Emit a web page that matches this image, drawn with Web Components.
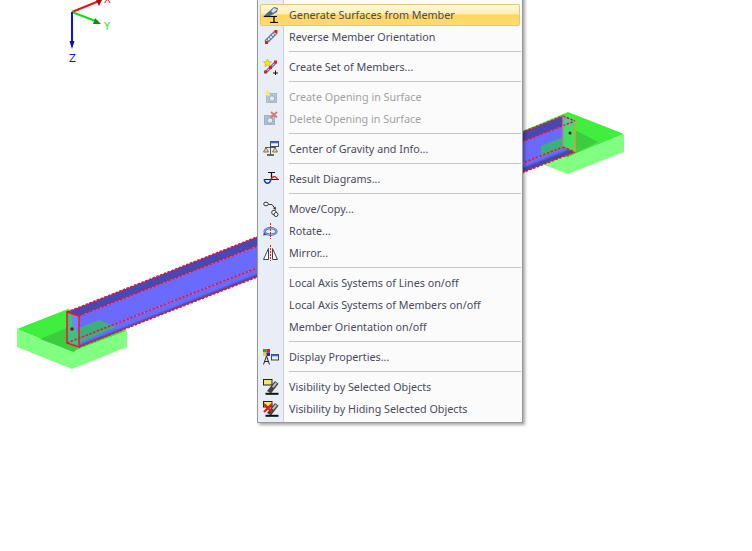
<!DOCTYPE html>
<html>
<head>
<meta charset="utf-8">
<title>Member context menu</title>
<style>
  html, body { margin: 0; padding: 0; background: #fff; overflow: hidden; }
  body { width: 752px; height: 551px; position: relative; font-family: "Noto Sans", "Liberation Sans", sans-serif; }
</style>
</head>
<body>
<model-view>
  <context-menu>
    <menu-item icon="surface" active>Generate Surfaces from Member</menu-item>
    <menu-item icon="reverse">Reverse Member Orientation</menu-item>
    <menu-sep></menu-sep>
    <menu-item icon="set">Create Set of Members...</menu-item>
    <menu-sep></menu-sep>
    <menu-item icon="opening" disabled>Create Opening in Surface</menu-item>
    <menu-item icon="delopening" disabled>Delete Opening in Surface</menu-item>
    <menu-sep></menu-sep>
    <menu-item icon="gravity">Center of Gravity and Info...</menu-item>
    <menu-sep></menu-sep>
    <menu-item icon="diagram">Result Diagrams...</menu-item>
    <menu-sep></menu-sep>
    <menu-item icon="move">Move/Copy...</menu-item>
    <menu-item icon="rotate">Rotate...</menu-item>
    <menu-item icon="mirror">Mirror...</menu-item>
    <menu-sep></menu-sep>
    <menu-item>Local Axis Systems of Lines on/off</menu-item>
    <menu-item>Local Axis Systems of Members on/off</menu-item>
    <menu-item>Member Orientation on/off</menu-item>
    <menu-sep></menu-sep>
    <menu-item icon="display">Display Properties...</menu-item>
    <menu-sep></menu-sep>
    <menu-item icon="visible">Visibility by Selected Objects</menu-item>
    <menu-item icon="hide">Visibility by Hiding Selected Objects</menu-item>
  </context-menu>
</model-view>

<script>
// small icons for the menu, all in a 16x16 box
const star = '<path d="M4.500 0l1.200 2.600 2.800.3-2.100 1.900.6 2.800-2.500-1.400-2.500 1.400.6-2.800L.5 2.900l2.800-.3z"';
const scope = '<path d="M4 12 12 2l3.500 2.800-7.500 9.700z" fill="#444"/><path d="M9 7.500l3.500-4.300 1.500 1.300-3.500 4.300z" fill="#c4c4c4"/><path d="M2.500 14.800h13" stroke="#111" stroke-width="2"/>';
const ICONS = {
  surface: `<path d="M0 10 3 7 11 0l4 1-1 4-7 4z" fill="#4f6890"/><path d="M8 4l3-3 3 1-1 2-3 2z" fill="#d5e0ee"/><path d="M1 9.500h13" stroke="#111" stroke-width="1.100"/><path d="M11 9.500v6" stroke="#111" stroke-width="1.400"/><path d="M7 15.500h8" stroke="#111" stroke-width="1.200"/>`,
  reverse: `<path d="M3 13 13 3" stroke="#68788f" stroke-width="4.500"/><path d="M3 13 13 3" stroke="#eef1f6" stroke-width="1.800" stroke-dasharray="2 1"/><rect x="11.500" y="1" width="3" height="3" fill="#d22"/><rect x="2" y="12" width="3" height="3" fill="#d22"/>`,
  set: `<path d="M3 13 13 3" stroke="#68788f" stroke-width="3"/><path d="M3 13 13 3" stroke="#eef1f6" stroke-width="1" stroke-dasharray="2 1"/>${star} fill="#f6e520" stroke="#a89a20" stroke-width=".5"/><rect x="11" y="1.500" width="3" height="3" fill="#d22"/><rect x="6" y="7" width="3" height="3" fill="#d22"/><rect x="1" y="11.500" width="3" height="3" fill="#d22"/><path d="M10 14h5M12.500 11.500v5" stroke="#111"/>`,
  opening: `<g opacity=".6"><rect x="3.500" y="4.500" width="10" height="9" fill="#8fb0c8" stroke="#7a98ac"/><circle cx="9" cy="9.500" r="2.800" fill="#dde6ee" stroke="#5f7f96"/>${star} fill="#f2e65a"/></g>`,
  delopening: `<g opacity=".65"><rect x="1.500" y="4.500" width="10" height="9" fill="#8fa8c8" stroke="#7a90ac"/><circle cx="7" cy="9.500" r="2.800" fill="#dde6ee" stroke="#5f7f96"/><path d="M8 1l6 5.500M14 1 8 6.500" stroke="#d83030" stroke-width="1.800"/></g>`,
  gravity: `<rect x="7.500" y="0.500" width="8" height="5" fill="#eef2f8" stroke="#3a4a60"/><rect x="7.500" y="0.500" width="8" height="1.800" fill="#3a6bc0"/><path d="M7.500 5.500v8M2 6.500h11" stroke="#555" stroke-width="1"/><path d="M3 6.500.5 11h5zM12 6.500 9.500 11h5z" fill="#e8d8a8" stroke="#6a5c2a" stroke-width=".8"/><path d="M4 14h7" stroke="#4a4a30" stroke-width="1.600"/>`,
  diagram: `<path d="M5 1.500h7M8.500 1.500v7" stroke="#111" stroke-width="1.200"/><path d="M1 8.500h15" stroke="#222" stroke-width="1"/><path d="M8 8.500c1.500-4 5-4 7 .5" fill="none" stroke="#d81818" stroke-width="1.200"/><path d="M1 8.500c1.500 5 5.500 5 7 0" fill="none" stroke="#2030d0" stroke-width="1.400"/>`,
  move: `<ellipse cx="3" cy="3" rx="2.300" ry="1.800" fill="#fff" stroke="#333"/><path d="M5.500 3.500h3.500l3 4" fill="none" stroke="#333"/><path d="M13 9l-3-1.800 2.500-1.600z" fill="#333"/><circle cx="11" cy="11.500" r="2.300" fill="#fff" stroke="#333"/><circle cx="13" cy="13.500" r="2" fill="#fff" stroke="#333"/>`,
  rotate: `<ellipse cx="7.500" cy="8.500" rx="6" ry="3.300" fill="none" stroke="#3f6fae" stroke-width="2.200"/><ellipse cx="7.500" cy="8.500" rx="6" ry="3.300" fill="none" stroke="#a8c8ea" stroke-width=".8"/><path d="M1 9.500l-1 3 4-.5z" fill="#2a5a9a"/><path d="M7.500 0v16" stroke="#e02020" stroke-dasharray="2 1"/>`,
  mirror: `<path d="M5.500 3.500 .5 14.500h5zM9.500 3.500l5 11h-5z" fill="#fff" stroke="#444" stroke-width="1"/><path d="M7.500 0v16" stroke="#e02020" stroke-dasharray="2 1"/>`,
  display: `<rect x="0" y="0" width="3.500" height="3.500" fill="#2a2"/><rect x="3.500" y="0" width="3.500" height="3.500" fill="#d22"/><rect x="0" y="3.500" width="3.500" height="3.500" fill="#ec2"/><rect x="3.500" y="3.500" width="3.500" height="3.500" fill="#22c"/><path d="M3.500 7 .5 15.500M3.500 7l3 8.500M1.500 12.500h4" stroke="#222" fill="none"/><rect x="8.500" y="5.500" width="7" height="5.500" fill="#eef2f8" stroke="#345"/><rect x="8.500" y="5.500" width="7" height="1.800" fill="#3a6bc0"/>`,
  visible: `${scope}<rect x=".5" y=".5" width="8.500" height="5.500" fill="#f5e85a" stroke="#222"/>`,
  hide: `${scope}<rect x=".5" y=".5" width="8.500" height="5.500" fill="#f5e85a" stroke="#222"/><path d="M1 3l8 8M9 3l-8 8" stroke="#e01818" stroke-width="2.200"/>`
};

class MenuItem extends HTMLElement {
  constructor() {
    super();
    this.attachShadow({ mode: 'open' });
    const name = this.getAttribute('icon');
    const art = name ? `<svg width="16" height="16" viewBox="0 0 16 16">${ICONS[name]}</svg>` : '';
    this.shadowRoot.innerHTML = `
      <style>
        :host { display: flex; align-items: center; height: 22px; margin-left: 1px; color: #4a4a5a; }
        :host([disabled]) { color: #a2a2a2; }
        :host([active]) { margin-left: 2px; width: 260px; box-sizing: border-box;
          border: 1px solid #e3c878; border-radius: 2px;
          background: linear-gradient(#fff8dc 0%, #ffedb0 45%, #ffd658 50%, #ffdc74 100%); }
        .icon { width: 24px; flex: none; display: flex; justify-content: center; align-items: center; }
        svg { display: block; }
        .text { padding-left: 6px; white-space: nowrap; }
        :host([active]) .icon { width: 20px; padding-right: 2px; }
      </style>
      <span class="icon">${art}</span><span class="text"><slot></slot></span>`;
  }
}

class MenuSep extends HTMLElement {
  constructor() {
    super();
    this.attachShadow({ mode: 'open' });
    this.shadowRoot.innerHTML = `
      <style>
        :host { display: block; height: 8px; box-sizing: border-box; padding: 3px 1px 0 31px; }
        div { height: 1px; background: #c6c6c6; }
      </style><div></div>`;
  }
}

class ContextMenu extends HTMLElement {
  constructor() {
    super();
    this.attachShadow({ mode: 'open' });
    this.shadowRoot.innerHTML = `
      <style>
        :host { display: block; position: absolute; left: 257px; top: -5px; width: 266px; box-sizing: border-box;
          padding: 8px 0 2px; border: 1px solid #979797; font-size: 10.75px; line-height: 22px;
          background: linear-gradient(90deg, #e9eef6 0, #e9eef6 25px, #c9ced6 25px, #c9ced6 26px, #fbfbfb 26px);
          box-shadow: 2px 2px 3px rgba(0,0,0,.35); }
      </style><slot></slot>`;
  }
}

class ModelView extends HTMLElement {
  constructor() {
    super();
    this.attachShadow({ mode: 'open' });
    const dash = 'stroke="#f41030" stroke-width="1.500" stroke-dasharray="2.500 1.500" fill="none"';
    this.shadowRoot.innerHTML = `
      <style>
        :host { display: block; width: 752px; height: 551px; position: relative; overflow: hidden; }
        svg { display: block; }
        text { font-family: "DejaVu Sans", sans-serif; font-size: 10px; }
      </style>
      <svg width="752" height="551" viewBox="0 0 752 551">
        <defs>
          <linearGradient id="under" gradientUnits="userSpaceOnUse" x1="67" y1="343" x2="70" y2="350.500">
            <stop offset="0" stop-color="#6a6aff"/><stop offset=".65" stop-color="#6a6aff"/><stop offset="1" stop-color="#4848a8"/>
          </linearGradient>
        </defs>

        <!-- axis cross -->
        <path d="M72 12 99 1" stroke="#f01010" stroke-width="2"/>
        <path d="M95 -2l8 0-4 8z" fill="#a01010"/>
        <path d="M72 12 98 22" stroke="#10e010" stroke-width="2"/>
        <path d="M95 18l6 6-8 0z" fill="#109010"/>
        <path d="M72 12V42" stroke="#1010e0" stroke-width="2"/>
        <path d="M69.500 41h5l-2.500 8z" fill="#101090"/>
        <text x="104" y="3" fill="#e01010">X</text>
        <text x="104" y="30" fill="#30e030">Y</text>
        <text x="69" y="62" fill="#1010e0">Z</text>

        <!-- left support -->
        <path d="M17 329 68 309 127 331 72 352z" fill="#40ee40"/>
        <path d="M17 329 72 352 72 369 17 347z" fill="#80ff80"/>
        <path d="M127 331 72 352 72 369 127 347z" fill="#80ff80"/>
        <path d="M40 339 67 328 79 347 74 352z" fill="#3ccc40"/>
        <path d="M79 347 99 320 122 331 79 348z" fill="#22c040"/>

        <!-- right support -->
        <path d="M513 135 568 112 624 134 568 157z" fill="#40ee40"/>
        <path d="M513 135 568 157 568 174 513 153z" fill="#80ff80"/>
        <path d="M624 134 568 157 568 174 624 152z" fill="#80ff80"/>
        <path d="M522 151 575 130 598 142 568 157z" fill="#3ccc40"/>

        <!-- member -->
        <path d="M67 312 563 116 575 121 79 316z" fill="#4848b0"/>
        <path d="M79 316 575 121 563 147 67 343z" fill="#6a6aff"/>
        <path d="M67 343 563 147 575 152 79 347z" fill="url(#under)"/>
        <path d="M67 312 79 316 79 347 67 343z" fill="#40c080"/>
        <path d="M72 314 79 316 79 334 72 326z" fill="#6a8ce8"/>
        <path d="M79 328 99 320 116 327 79 343z" fill="#3cb07c"/>
        <path d="M541 146 563 137 563 148 541 157z" fill="#3cb07c"/>
        <path d="M563 116 575 121 575 152 563 147z" fill="#40e060"/>
        <path d="M563 116 575 121 575 126 563 124z" fill="#50c8a0"/>
        <circle cx="72" cy="329" r="1.800" fill="#7a1818"/>
        <circle cx="570" cy="133" r="1.500" fill="#502020"/>

        <!-- selection lines -->
        <path d="M67 312 563 116" ${dash}/>
        <path d="M79 316 575 121" ${dash}/>
        <path d="M67 343 563 147" ${dash}/>
        <path d="M79 347 575 152" ${dash}/>
        <path d="M563 116 575 121M563 147 575 152" ${dash}/>
        <path d="M67 312 79 316V347L67 343z" fill="none" stroke="#f41030" stroke-width="1.500"/>
        <path d="M563 116V147" stroke="#e0709a" stroke-width="1.400"/>
        <path d="M575 121V152" stroke="#e89a30" stroke-width="1.400"/>
      </svg>
      <slot></slot>`;
  }
}

customElements.define('menu-item', MenuItem);
customElements.define('menu-sep', MenuSep);
customElements.define('context-menu', ContextMenu);
customElements.define('model-view', ModelView);
</script>
</body>
</html>
